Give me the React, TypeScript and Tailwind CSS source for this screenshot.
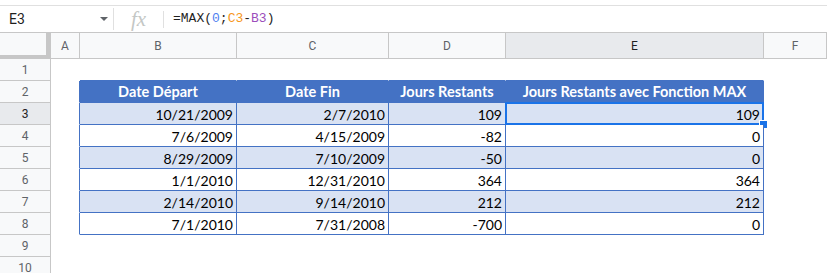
import React from "react";

const cols = [
  { key: "A", w: "w-[29px]" },
  { key: "B", w: "w-[157px]" },
  { key: "C", w: "w-[152px]" },
  { key: "D", w: "w-[117px]" },
  { key: "E", w: "w-[258px]" },
  { key: "F", w: "flex-1" },
];

const headers = ["Date Départ", "Date Fin", "Jours Restants", "Jours Restants avec Fonction MAX"];

const data = [
  ["10/21/2009", "2/7/2010", "109", "109"],
  ["7/6/2009", "4/15/2009", "-82", "0"],
  ["8/29/2009", "7/10/2009", "-50", "0"],
  ["1/1/2010", "12/31/2010", "364", "364"],
  ["2/14/2010", "9/14/2010", "212", "212"],
  ["7/1/2010", "7/31/2008", "-700", "0"],
];

function FormulaBar() {
  return (
    <div className="h-[27px] flex items-center border-b border-[#c7c7c7] bg-white">
      <div className="w-[113px] h-full flex items-center pl-[9px]">
        <span className="text-[14px] text-[#1f1f1f] font-['Roboto',sans-serif]">E3</span>
        <span className="ml-auto mr-[5px] w-0 h-0 border-l-[4px] border-r-[4px] border-t-[4px] border-l-transparent border-r-transparent border-t-[#5f6368]" />
      </div>
      <div className="w-px h-[22px] bg-[#e0e0e0]" />
      <div className="w-[49px] flex justify-center">
        <span className="font-['Liberation_Serif',serif] italic text-[21px] leading-none text-[#c4c7c5]">fx</span>
      </div>
      <div className="w-px h-[17px] bg-[#e0e0e0]" />
      <div className="ml-[9px] font-['Liberation_Mono',monospace] text-[13px] text-[#1f1f1f]">
        =MAX(<span className="text-[#4f80f0]">0</span>;<span className="text-[#f7981d]">C3</span>-<span className="text-[#9c4dbb]">B3</span>)
      </div>
    </div>
  );
}

function ColumnHeaders() {
  return (
    <div className="h-[26px] flex border-b border-[#c7c7c7]">
      <div className="w-[51px] h-full bg-[#f8f9fa] border-r-[5px] border-b-[3px] border-[#c7c7c7]" />
      {cols.map((c) => (
        <div
          key={c.key}
          className={`${c.w} h-full flex items-center justify-center border-r border-[#c7c7c7] text-[12px] font-['Roboto',sans-serif] ${
            c.key === "E" ? "bg-[#e8eaed] text-[#1f1f1f]" : "bg-[#f8f9fa] text-[#5f6368]"
          }`}
        >
          {c.key}
        </div>
      ))}
    </div>
  );
}

function Row({ n }: { n: number }) {
  const inTable = n >= 2 && n <= 8;
  const isHeader = n === 2;
  const banded = n === 3 || n === 5 || n === 7;
  const values = inTable && !isHeader ? data[n - 3] : null;

  return (
    <div className="h-[22px] flex">
      <div
        className={`w-[51px] h-full flex items-center justify-center border-r border-b border-[#c7c7c7] text-[12px] font-['Roboto',sans-serif] ${
          n === 3 ? "bg-[#e8eaed] text-[#1f1f1f]" : "bg-[#f8f9fa] text-[#5f6368]"
        }`}
      >
        {n}
      </div>
      {cols.map((c, ci) => {
        const tableCol = ci >= 1 && ci <= 4;
        let cls = `${c.w} h-full relative border-r border-b `;
        if (c.key === "A") {
          cls += inTable ? "border-r-[#4472c4] border-b-transparent" : "border-transparent";
        } else if (tableCol && inTable) {
          cls += "border-[#4472c4] ";
          cls += isHeader ? "bg-[#4472c4]" : banded ? "bg-[#d9e2f3]" : "bg-white";
        } else if (tableCol && n === 1) {
          cls += "border-r-transparent border-b-[#4472c4]";
        } else {
          cls += "border-transparent";
        }
        return (
          <div key={c.key} className={cls}>
            {isHeader && tableCol && (
              <div className="h-full flex items-end justify-center pb-[2px] font-['Lato',sans-serif] font-bold text-[14.5px] leading-[17px] text-white whitespace-nowrap">
                {headers[ci - 1]}
              </div>
            )}
            {values && tableCol && (
              <div className="h-full flex items-end justify-end pr-[3px] pb-[1px] font-['Lato',sans-serif] text-[14px] leading-[17px] text-black">
                {values[ci - 1]}
              </div>
            )}
            {n === 3 && c.key === "E" && (
              <>
                <div className="absolute -top-px -left-px -right-px -bottom-px border-2 border-[#1a73e8] pointer-events-none" />
                <div className="absolute -right-[4px] -bottom-[4px] w-[7px] h-[7px] bg-[#1a73e8] outline outline-1 outline-white" />
              </>
            )}
          </div>
        );
      })}
    </div>
  );
}

export default function App() {
  return (
    <div className="w-[827px] h-[273px] overflow-hidden bg-white">
      <div className="h-[6px] border-b border-[#e0e0e0]" />
      <FormulaBar />
      <ColumnHeaders />
      {[1, 2, 3, 4, 5, 6, 7, 8, 9, 10].map((n) => (
        <Row key={n} n={n} />
      ))}
    </div>
  );
}
